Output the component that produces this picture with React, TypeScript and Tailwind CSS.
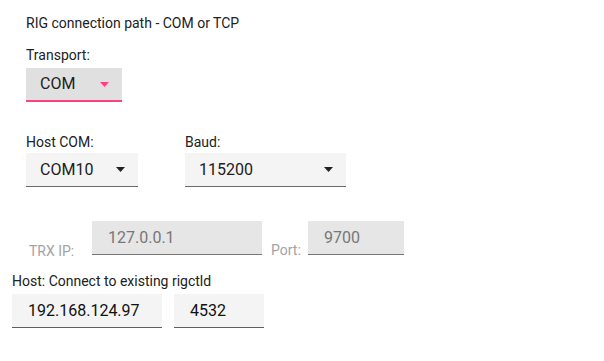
import React from 'react';

const Caret = ({ color }: { color: string }) => (
  <svg width="9" height="5" viewBox="0 0 9 5" className="shrink-0">
    <polygon points="0,0 9,0 4.5,5" fill={color} />
  </svg>
);

interface SelectProps {
  value: string;
  width: string;
  active?: boolean;
}

const FakeSelect = ({ value, width, active }: SelectProps) => (
  <div
    className={`${width} h-[34px] flex items-center justify-between pl-[14px] pr-[13px] text-[16px] text-[#212121] ${
      active
        ? 'bg-[#e0e0e0] border-b-2 border-[#ff4081]'
        : 'bg-[#f4f4f4] border-b border-[#6b6b6b] h-[33px]'
    }`}
  >
    <span>{value}</span>
    <Caret color={active ? '#ff4081' : '#212121'} />
  </div>
);

interface FieldProps {
  value: string;
  width: string;
  disabled?: boolean;
}

const Field = ({ value, width, disabled }: FieldProps) => (
  <input
    defaultValue={value}
    disabled={disabled}
    className={`${width} h-[34px] px-4 text-[16px] outline-none border-b ${
      disabled
        ? 'bg-[#e6e6e6] text-[#777777] border-[#777777]'
        : 'bg-[#f4f4f4] text-[#111111] border-[#5e5e5e]'
    }`}
  />
);

const App = () => {
  return (
    <div
      className="w-[604px] h-[361px] bg-white text-[#212121] text-[14px] leading-4"
      style={{ fontFamily: 'Roboto, "Noto Sans", sans-serif' }}
    >
      <div className="pt-[15px] pl-[26px]">
        {/* title */}
        <div>RIG connection path - COM or TCP</div>

        {/* transport */}
        <div className="mt-4">Transport:</div>
        <div className="mt-[5px]">
          <FakeSelect value="COM" width="w-[96px]" active />
        </div>

        {/* host com + baud */}
        <div className="mt-8 flex gap-[47px]">
          <div className="flex flex-col gap-[3px]">
            <div>Host COM:</div>
            <FakeSelect value="COM10" width="w-[112px]" />
          </div>
          <div className="flex flex-col gap-[3px]">
            <div>Baud:</div>
            <FakeSelect value="115200" width="w-[161px]" />
          </div>
        </div>

        {/* trx ip (disabled) */}
        <div className="mt-[34px] flex items-end text-[#a3a3a3]">
          <div className="ml-[3px] w-[63px]">TRX IP:</div>
          <div className="mb-1">
            <Field value="127.0.0.1" width="w-[170px]" disabled />
          </div>
          <div className="ml-[9px] w-[37px] mb-[1px]">Port:</div>
          <div className="mb-1">
            <Field value="9700" width="w-[96px]" disabled />
          </div>
        </div>
      </div>

      {/* rigctld host */}
      <div className="pl-3 mt-[14px]">
        <div>Host: Connect to existing rigctld</div>
        <div className="mt-[5px] flex gap-3">
          <Field value="192.168.124.97" width="w-[150px]" />
          <Field value="4532" width="w-[90px]" />
        </div>
      </div>
    </div>
  );
};

export default App;
